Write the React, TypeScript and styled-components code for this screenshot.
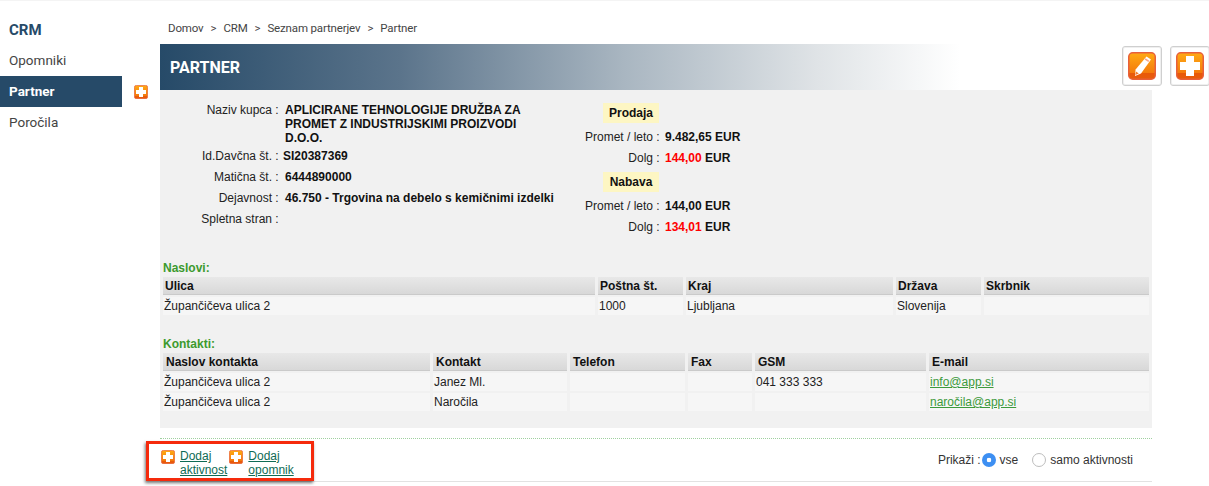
import React from "react";
import styled, { createGlobalStyle } from "styled-components";

const Global = createGlobalStyle`
  html, body { margin: 0; padding: 0; background: #fff; height: 486px; overflow: hidden; }
  body { font-family: "Liberation Sans", Arial, sans-serif; font-size: 12px; color: #222; }
  * { box-sizing: border-box; }
`;

const Page = styled.div`
  display: flex;
  width: 1209px;
  height: 486px;
  overflow: hidden;
  border-top: 1px solid #f4f4f4;
`;

const Sidebar = styled.nav`
  width: 160px;
  flex: none;
  padding-top: 19px;
  font-family: Roboto, sans-serif;
`;

const SideTitle = styled.div`
  padding-left: 9px;
  height: 21px;
  line-height: 21px;
  font-size: 15px;
  font-weight: 700;
  color: #264a68;
  margin-bottom: 4px;
`;

const SideRow = styled.div`
  display: flex;
  align-items: center;
  height: 31px;
`;

const SideItem = styled.div<{ $active?: boolean }>`
  width: 122px;
  height: 31px;
  line-height: 31px;
  padding-left: 9px;
  font-size: 13.5px;
  font-weight: ${(p) => (p.$active ? 700 : 400)};
  color: ${(p) => (p.$active ? "#fff" : "#444")};
  background: ${(p) => (p.$active ? "#264a68" : "transparent")};
`;

const SideAdd = styled.span`
  margin-left: 12px;
  display: flex;
`;

const Main = styled.main`
  width: 1049px;
  flex: none;
`;

const Crumbs = styled.div`
  display: flex;
  gap: 7px;
  padding: 20px 0 0 8px;
  height: 43px;
  font-family: Roboto, sans-serif;
  font-size: 11.5px;
  letter-spacing: -0.15px;
  line-height: 14px;
  color: #444;
`;

const HeadRow = styled.div`
  display: flex;
  align-items: flex-start;
  height: 46px;
`;

const HeadBar = styled.h1`
  margin: 0;
  flex: none;
  width: 800px;
  height: 46px;
  padding-left: 10px;
  line-height: 47px;
  font-family: Roboto, sans-serif;
  font-size: 16px;
  font-weight: 700;
  color: #fff;
  background: linear-gradient(90deg, #264a68 0%, #5b748b 30%, #a9b6c1 58%, #dfe3e6 82%, #ffffff 100%);
`;

const ToolGroup = styled.div`
  display: flex;
  gap: 8px;
  margin: 2px 0 0 162px;
`;

const ToolButton = styled.div`
  width: 40px;
  height: 40px;
  flex: none;
  display: flex;
  align-items: center;
  justify-content: center;
  background: #fff;
  border: 1px solid #cfcfcf;
  border-radius: 3px;
  box-shadow: inset 0 0 0 1px #efefef;
`;

const Panel = styled.section`
  width: 992px;
  height: 338px;
  background: #f1f1f1;
  padding-top: 13px;
`;

const Info = styled.div`
  display: flex;
  height: 158px;
`;

const InfoLeft = styled.div`
  width: 403px;
  flex: none;
`;

const InfoRow = styled.div<{ $h: number }>`
  display: grid;
  grid-template-columns: 122px 1fr;
  column-gap: 3px;
  height: ${(p) => p.$h}px;
  line-height: 14px;
`;

const InfoLabel = styled.div`
  text-align: right;
  white-space: pre;
`;

const InfoValue = styled.div<{ $shift?: boolean; $nowrap?: boolean }>`
  font-weight: 700;
  color: #111;
  margin-left: ${(p) => (p.$shift ? -2 : 0)}px;
  width: ${(p) => (p.$nowrap ? "auto" : "270px")};
  white-space: ${(p) => (p.$nowrap ? "nowrap" : "normal")};
`;

const InfoRight = styled.div`
  width: 300px;
  margin-left: -1px;
`;

const Badge = styled.div<{ $gap: number }>`
  width: 56px;
  height: 20px;
  margin: 0 0 ${(p) => p.$gap}px 41px;
  line-height: 20px;
  text-align: center;
  font-weight: 700;
  color: #111;
  background: #fdf6c3;
`;

const MoneyRow = styled.div`
  display: grid;
  grid-template-columns: 101px 1fr;
  column-gap: 2px;
  height: 21px;
  line-height: 14px;
`;

const MoneyLabel = styled.div`
  text-align: right;
  white-space: pre;
`;

const MoneyValue = styled.div`
  font-weight: 700;
  color: #111;
`;

const Red = styled.span`
  color: #f00;
`;

const SectionTitle = styled.div<{ $top: number }>`
  margin: ${(p) => p.$top}px 0 0 3px;
  height: 16px;
  line-height: 14px;
  font-weight: 700;
  color: #3c9a2e;
`;

const Grid = styled.div<{ $cols: string }>`
  display: grid;
  grid-template-columns: ${(p) => p.$cols};
  column-gap: 3px;
  row-gap: 2px;
  margin-left: 3px;
  width: 986px;
`;

const HeadCell = styled.div<{ $pad: number }>`
  height: 18px;
  line-height: 18px;
  padding-left: ${(p) => p.$pad}px;
  font-weight: 700;
  color: #111;
  background: linear-gradient(#e8e8e8, #d8d8d8);
  border-bottom: 1px solid #cacaca;
`;

const BodyCell = styled.div`
  height: 18px;
  line-height: 18px;
  padding-left: 1px;
  color: #222;
  background: #f6f6f6;
  white-space: nowrap;
`;

const MailLink = styled.a`
  color: #3c9a3c;
  text-decoration: underline;
`;

const Dotted = styled.div`
  width: 992px;
  margin-top: 10px;
  border-top: 1px dotted #9fd09f;
`;

const ActionRow = styled.div`
  display: flex;
  justify-content: space-between;
  width: 992px;
  height: 43px;
  border-bottom: 1px solid #e2e2e2;
`;

const Highlight = styled.div`
  display: flex;
  gap: 2px;
  height: 40px;
  width: 168px;
  margin: 2px 0 0 -14px;
  padding: 6px 0 0 12px;
  border: 3px solid #f52a0c;
  box-shadow: -1px 2px 3px rgba(0, 0, 0, 0.55);
  background: #fff;
`;

const AddLink = styled.div`
  display: flex;
  gap: 5px;
  align-items: flex-start;
`;

const AddText = styled.a`
  margin-top: -1px;
  color: #0f6b55;
  text-decoration: underline;
  line-height: 14px;
`;

const Filter = styled.div`
  display: flex;
  align-items: center;
  height: 42px;
  padding-right: 19px;
  font-size: 12px;
  color: #333;
`;

const Radio = styled.span<{ $on?: boolean }>`
  width: 14px;
  height: 14px;
  margin: 0 4px 0 ${(p) => (p.$on ? 1 : 14)}px;
  border-radius: 50%;
  display: inline-block;
  background: ${(p) => (p.$on ? "radial-gradient(circle, #fff 0 2px, #3d8ff2 2.6px)" : "#fff")};
  border: ${(p) => (p.$on ? "0" : "1px solid #bdbdbd")};
`;

const PlusIcon = ({ size }: { size: number }) => (
  <svg width={size} height={size} viewBox="0 0 28 28" aria-hidden="true">
    <defs>
      <linearGradient id={`pg${size}`} x1="0" y1="0" x2="0" y2="1">
        <stop offset="0" stopColor="#ffab14" />
        <stop offset="0.77" stopColor="#f47a0c" />
        <stop offset="0.78" stopColor="#e8590a" />
        <stop offset="1" stopColor="#e85c0c" />
      </linearGradient>
    </defs>
    <rect x="0.75" y="0.75" width="26.5" height="26.5" rx="4" fill={`url(#pg${size})`} stroke="#e8603a" strokeWidth="1.5" />
    <path d="M10 4h8v6h6v8h-6v6h-8v-6H4v-8h6z" fill="#fff" />
  </svg>
);

const PencilIcon = () => (
  <svg width="28" height="28" viewBox="0 0 28 28" aria-hidden="true">
    <defs>
      <linearGradient id="pe" x1="0" y1="0" x2="0" y2="1">
        <stop offset="0" stopColor="#ffab14" />
        <stop offset="0.77" stopColor="#f47a0c" />
        <stop offset="0.78" stopColor="#e8590a" />
        <stop offset="1" stopColor="#e85c0c" />
      </linearGradient>
    </defs>
    <rect x="0.75" y="0.75" width="26.5" height="26.5" rx="4" fill="url(#pe)" stroke="#e8603a" strokeWidth="1.5" />
    <path d="M18.5 4.5l4.5 3-10 14-6 2.5.6-6.5z" fill="#fff" />
    <path d="M17.6 6.2l3.7 2.5-1 1.4-3.7-2.5z" fill="#f6a58a" />
    <path d="M8 19.5l2.8 1.9-3.5 1.5z" fill="#f07a2c" />
  </svg>
);

const addressCols = "432px 85px 207px 85px 165px";
const contactCols = "267px 134px 115px 64px 171px 220px";

const addressHead = ["Ulica", "Poštna št.", "Kraj", "Država", "Skrbnik"];
const addressRow = ["Župančičeva ulica 2", "1000", "Ljubljana", "Slovenija", ""];
const contactHead = ["Naslov kontakta", "Kontakt", "Telefon", "Fax", "GSM", "E-mail"];
const contactRows = [
  ["Župančičeva ulica 2", "Janez Ml.", "", "", "041 333 333", "info@app.si"],
  ["Župančičeva ulica 2", "Naročila", "", "", "", "naročila@app.si"],
];

export default function App() {
  return (
    <Page>
      <Global />
      <Sidebar>
        <SideTitle>CRM</SideTitle>
        <SideRow><SideItem>Opomniki</SideItem></SideRow>
        <SideRow>
          <SideItem $active>Partner</SideItem>
          <SideAdd><PlusIcon size={14} /></SideAdd>
        </SideRow>
        <SideRow><SideItem>Poročila</SideItem></SideRow>
      </Sidebar>
      <Main>
        <Crumbs>
          <span>Domov</span><span>&gt;</span><span>CRM</span><span>&gt;</span>
          <span>Seznam partnerjev</span><span>&gt;</span><span>Partner</span>
        </Crumbs>
        <HeadRow>
          <HeadBar>PARTNER</HeadBar>
          <ToolGroup>
            <ToolButton><PencilIcon /></ToolButton>
            <ToolButton><PlusIcon size={28} /></ToolButton>
          </ToolGroup>
        </HeadRow>
        <Panel>
          <Info>
            <InfoLeft>
              <InfoRow $h={46}>
                <InfoLabel>Naziv kupca : </InfoLabel>
                <InfoValue>APLICIRANE TEHNOLOGIJE DRUŽBA ZA PROMET Z INDUSTRIJSKIMI PROIZVODI D.O.O.</InfoValue>
              </InfoRow>
              <InfoRow $h={21}>
                <InfoLabel>Id.Davčna št. : </InfoLabel>
                <InfoValue $shift $nowrap>SI20387369</InfoValue>
              </InfoRow>
              <InfoRow $h={21}>
                <InfoLabel>Matična št. : </InfoLabel>
                <InfoValue>6444890000</InfoValue>
              </InfoRow>
              <InfoRow $h={21}>
                <InfoLabel>Dejavnost : </InfoLabel>
                <InfoValue $nowrap>46.750 - Trgovina na debelo s kemičnimi izdelki</InfoValue>
              </InfoRow>
              <InfoRow $h={21}>
                <InfoLabel>Spletna stran : </InfoLabel>
                <InfoValue />
              </InfoRow>
            </InfoLeft>
            <InfoRight>
              <Badge $gap={7}>Prodaja</Badge>
              <MoneyRow><MoneyLabel>Promet / leto : </MoneyLabel><MoneyValue>9.482,65 EUR</MoneyValue></MoneyRow>
              <MoneyRow><MoneyLabel>Dolg : </MoneyLabel><MoneyValue><Red>144,00</Red> EUR</MoneyValue></MoneyRow>
              <Badge $gap={7}>Nabava</Badge>
              <MoneyRow><MoneyLabel>Promet / leto : </MoneyLabel><MoneyValue>144,00 EUR</MoneyValue></MoneyRow>
              <MoneyRow><MoneyLabel>Dolg : </MoneyLabel><MoneyValue><Red>134,01</Red> EUR</MoneyValue></MoneyRow>
            </InfoRight>
          </Info>
          <SectionTitle $top={0}>Naslovi:</SectionTitle>
          <Grid $cols={addressCols}>
            {addressHead.map((h) => <HeadCell key={h} $pad={2}>{h}</HeadCell>)}
            {addressRow.map((c, i) => <BodyCell key={i}>{c}</BodyCell>)}
          </Grid>
          <SectionTitle $top={22}>Kontakti:</SectionTitle>
          <Grid $cols={contactCols}>
            {contactHead.map((h) => <HeadCell key={h} $pad={3}>{h}</HeadCell>)}
            {contactRows.map((r, ri) =>
              r.map((c, i) => (
                <BodyCell key={`${ri}-${i}`}>
                  {i === 5 ? <MailLink href="#">{c}</MailLink> : c}
                </BodyCell>
              ))
            )}
          </Grid>
        </Panel>
        <Dotted />
        <ActionRow>
          <Highlight>
            <AddLink>
              <PlusIcon size={14} />
              <AddText href="#">Dodaj<br />aktivnost</AddText>
            </AddLink>
            <AddLink>
              <PlusIcon size={14} />
              <AddText href="#">Dodaj<br />opomnik</AddText>
            </AddLink>
          </Highlight>
          <Filter>
            Prikaži :
            <Radio $on />vse
            <Radio />samo aktivnosti
          </Filter>
        </ActionRow>
      </Main>
    </Page>
  );
}
